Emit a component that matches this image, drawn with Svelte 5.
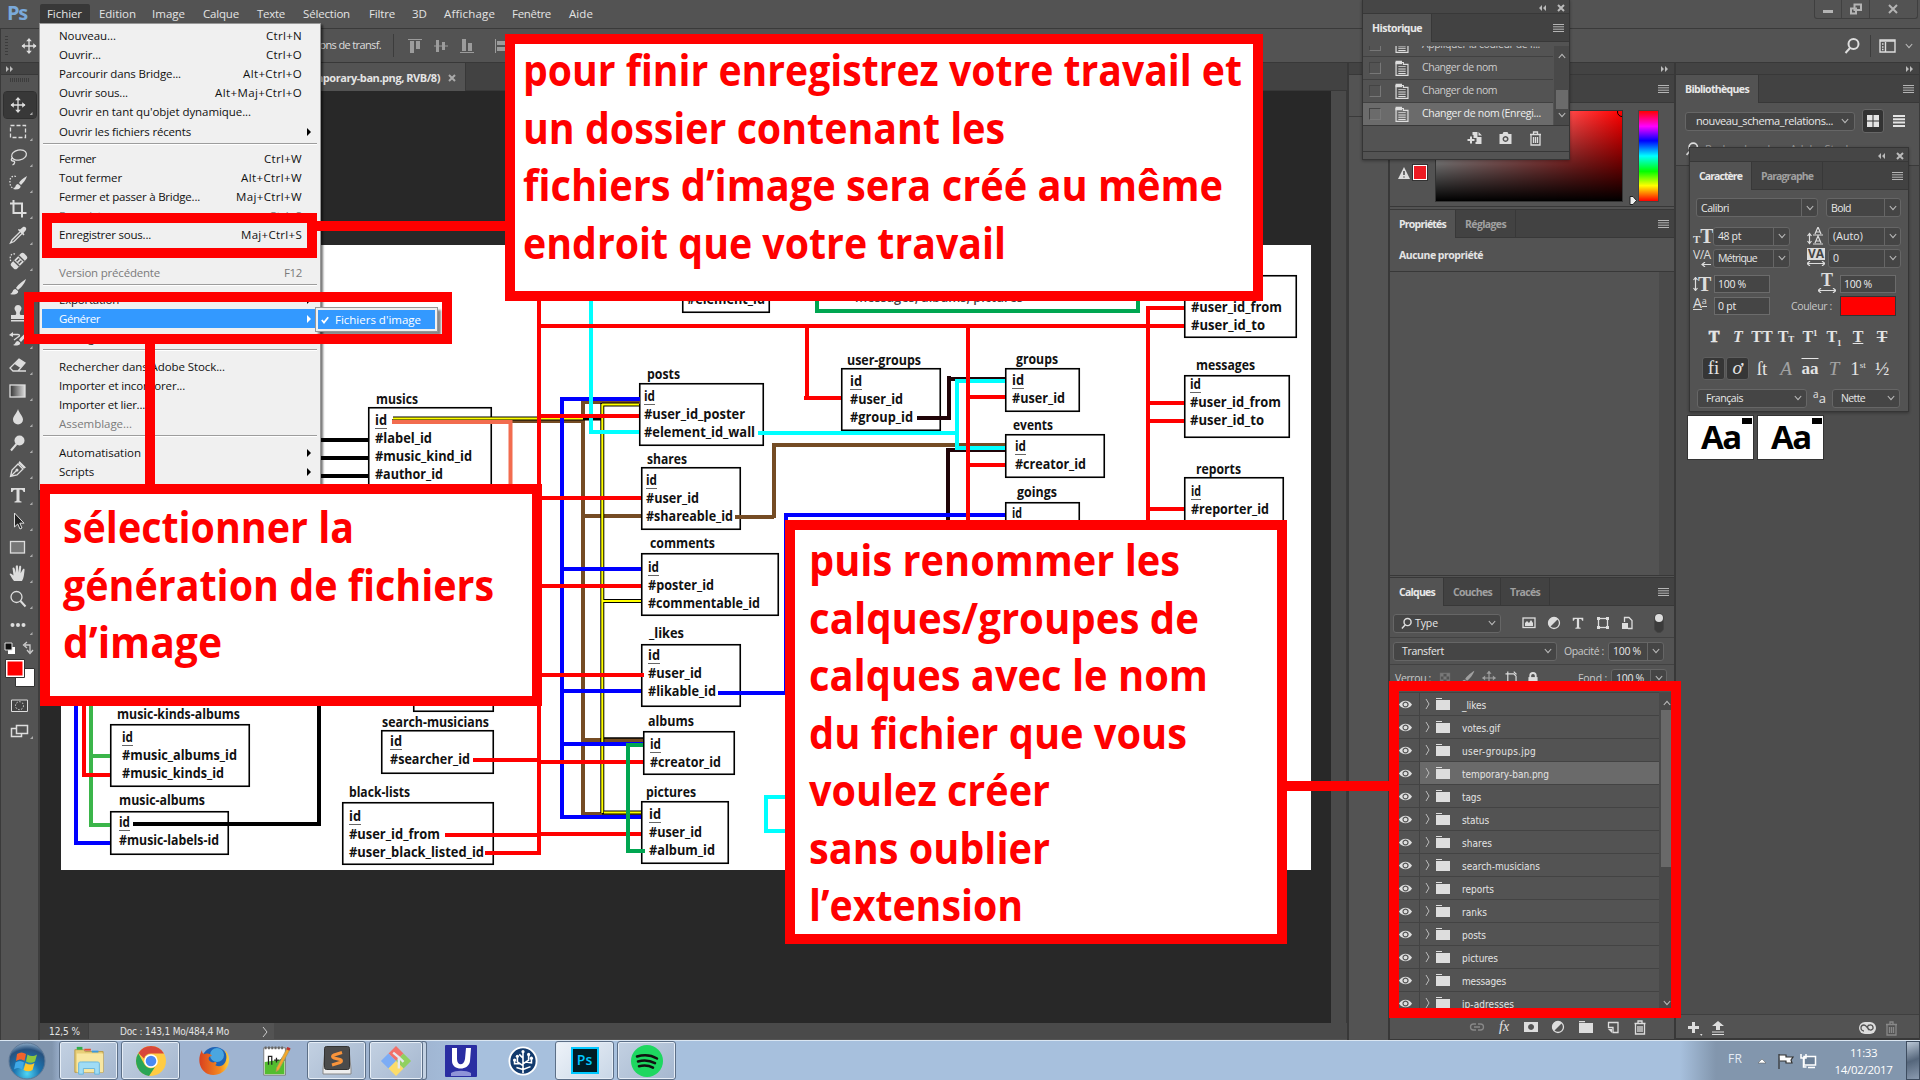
<script>
  // Spreads letters so a label occupies its designed width.
  function fit(node, w) {
    if (!w) return;
    const n = node.textContent.length;
    node.style.letterSpacing = (w - node.getBoundingClientRect().width) / n + 'px';
  }

  const menus = [
    ['Fichier', 50, 35], ['Edition', 53, 37], ['Image', 51, 33], ['Calque', 54, 36], ['Texte', 46, 28],
    ['Sélection', 66, 47], ['Filtre', 43, 26], ['3D', 32, 15], ['Affichage', 68, 51], ['Fenêtre', 57, 39], ['Aide', 45, 24]
  ];

  const groups = [
    [
      { l: 'Nouveau...', w: 57, k: 'Ctrl+N', kw: 36 }, { l: 'Ouvrir...', w: 42, k: 'Ctrl+O', kw: 36 },
      { l: 'Parcourir dans Bridge...', w: 122, k: 'Alt+Ctrl+O', kw: 59 }, { l: 'Ouvrir sous...', w: 69, k: 'Alt+Maj+Ctrl+O', kw: 87 },
      { l: "Ouvrir en tant qu'objet dynamique...", w: 192 }, { l: 'Ouvrir les fichiers récents', w: 132, sub: true, gap: 1 }
    ],
    [
      { l: 'Fermer', w: 37, k: 'Ctrl+W', kw: 38 }, { l: 'Tout fermer', w: 63, k: 'Alt+Ctrl+W', kw: 61 },
      { l: 'Fermer et passer à Bridge...', w: 141, k: 'Maj+Ctrl+W', kw: 66 }, { l: 'Enregistrer', w: 58, k: 'Ctrl+S', kw: 33, off: true },
      { l: 'Enregistrer sous...', w: 92, k: 'Maj+Ctrl+S', kw: 61 }, { l: 'Archiver...', w: 55, off: true },
      { l: 'Version précédente', w: 101, k: 'F12', kw: 18, off: true }
    ],
    [
      { l: 'Exportation', w: 60, sub: true, gap: 1 }, { l: 'Générer', w: 41, sub: true, on: true },
      { l: 'Partager...', w: 56 }
    ],
    [
      { l: 'Rechercher dans Adobe Stock...', w: 166, gap: 2 }, { l: 'Importer et incorporer...', w: 126 },
      { l: 'Importer et lier...', w: 86 }, { l: 'Assemblage...', w: 73, off: true }
    ],
    [{ l: 'Automatisation', w: 82, sub: true, gap: 2 }, { l: 'Scripts', w: 35, sub: true }]
  ];

  const tools = ['move', 'marquee', 'lasso', 'quick', 'crop', 'dropper', 'heal', 'brush', 'stamp', 'history', 'eraser',
    'gradient', 'drop', 'dodge', 'pen', 'type', 'arrow', 'rect', 'hand', 'zoom', 'dots'];

  const layers = [['_likes', 24], ['votes.gif', 38], ['user-groups.jpg', 74], ['temporary-ban.png', 87], ['tags', 19], ['status', 27],
    ['shares', 30], ['search-musicians', 78], ['reports', 32], ['ranks', 25], ['posts', 24], ['pictures', 36], ['messages', 44], ['ip-adresses', 52]];

  // Tables of the diagram: outline [x, y, right, bottom], title and rows [text, x, right, baseline].
  const tables = [
    { b: [368, 407, 492, 500], r: [['musics', 376, 418, 404], ['id', 375, 387, 425], ['#label_id', 375, 432, 443], ['#music_kind_id', 375, 472, 461], ['#author_id', 375, 443, 479]] },
    { b: [110, 724, 250, 787], r: [['music-kinds-albums', 117, 240, 719], ['id', 122, 133, 742], ['#music_albums_id', 122, 237, 760], ['#music_kinds_id', 122, 224, 778]] },
    { b: [110, 811, 229, 855], r: [['music-albums', 119, 205, 805], ['id', 119, 130, 827], ['#music-labels-id', 119, 219, 845]] },
    { b: [413, 650, 494, 712], r: [] },
    { b: [381, 730, 494, 774], r: [['search-musicians', 382, 489, 727], ['id', 390, 402, 746], ['#searcher_id', 390, 470, 764]] },
    { b: [342, 802, 494, 865], r: [['black-lists', 349, 410, 797], ['id', 349, 361, 821], ['#user_id_from', 349, 440, 839], ['#user_black_listed_id', 349, 484, 857]] },
    { b: [682, 250, 770, 313], r: [['#element_id', 687, 765, 304]] },
    { b: [639, 383, 764, 446], r: [['posts', 647, 680, 379], ['id', 644, 655, 401], ['#user_id_poster', 644, 745, 419], ['#element_id_wall', 644, 755, 437]] },
    { b: [641, 467, 741, 530], r: [['shares', 647, 687, 464], ['id', 646, 657, 485], ['#user_id', 646, 699, 503], ['#shareable_id', 646, 733, 521]] },
    { b: [641, 553, 779, 616], r: [['comments', 650, 715, 548], ['id', 648, 659, 572], ['#poster_id', 648, 714, 590], ['#commentable_id', 648, 760, 608]] },
    { b: [641, 644, 741, 707], r: [['_likes', 649, 684, 638], ['id', 648, 660, 660], ['#user_id', 648, 702, 678], ['#likable_id', 648, 716, 696]] },
    { b: [643, 731, 735, 775], r: [['albums', 648, 694, 726], ['id', 650, 661, 749], ['#creator_id', 650, 721, 767]] },
    { b: [641, 801, 729, 864], r: [['pictures', 646, 696, 797], ['id', 649, 661, 819], ['#user_id', 649, 702, 837], ['#album_id', 649, 715, 855]] },
    { b: [841, 368, 941, 431], r: [['user-groups', 847, 921, 365], ['id', 850, 862, 386], ['#user_id', 850, 903, 404], ['#group_id', 850, 913, 422]] },
    { b: [1005, 368, 1080, 412], r: [['groups', 1016, 1058, 364], ['id', 1012, 1024, 385], ['#user_id', 1012, 1065, 403]] },
    { b: [1005, 434, 1105, 478], r: [['events', 1013, 1053, 430], ['id', 1015, 1026, 451], ['#creator_id', 1015, 1086, 469]] },
    { b: [1005, 502, 1080, 540], r: [['goings', 1017, 1057, 497], ['id', 1012, 1022, 518]] },
    { b: [1184, 275, 1297, 338], r: [['#user_id_from', 1191, 1282, 312], ['#user_id_to', 1191, 1265, 330]] },
    { b: [1184, 375, 1290, 438], r: [['messages', 1196, 1255, 370], ['id', 1190, 1201, 389], ['#user_id_from', 1190, 1281, 407], ['#user_id_to', 1190, 1264, 425]] },
    { b: [1184, 477, 1284, 540], r: [['reports', 1196, 1241, 474], ['id', 1191, 1201, 496], ['#reporter_id', 1191, 1269, 514]] }
  ];

  const links = [
    ['#000', 4, 'M321 440H368M321 458H368M321 476H368'],
    ['#754c24', 4, 'M392 421H583M583 400V816M583 402H640M583 516H641M735 517H774M774 518V445M772 445H1005M583 740H643M583 814H641'],
    ['#000', 4, 'M393 418.5H604M602.3 403V813M602 404.5H639M602 601H641M602 812.5H641'],
    ['#000', 1.4, 'M602 738H643'],
    ['#ff0', 2, 'M393 418.5H583M602.3 404V813M602 404.5H639M602 601H641M604 812.5H641'],
    ['#200408', 4, 'M917 418H951M949 420V376M947 379H1005M948 520V450H1005'],
    ['#00f', 4, 'M640 399H562V817H641M562 569H641M562 691H641M562 744H643M718 693H786M786 530V515H1005M786 515V693'],
    ['#0ff', 4, 'M591 296V432H639M758 433H957M1005 381H957V448H1005M785 797H766V833M764 831H786'],
    ['#f26c4f', 4, 'M392 422H512M510.500 420V490'],
    ['#f00', 4, 'M539 296V853H485M539 326H1184M539 416H639M539 498H641M539 586H641M539 675H644M473 760H540M540 762H643M445 835H540M540 834H641M807 326V399M804 398H841M968 326V530M968 397H1005M968 465H1005M1148 530V308H1184M1148 403H1184M1148 421H1184M1148 509H1184'],
    ['#3bb54a', 4, 'M91 700V825H110M91 756H110'],
    ['#f00', 4, 'M84 700V775H110'],
    ['#00f', 4, 'M76 700V843H110'],
    ['#000', 4, 'M133 824H319V700'],
    ['#00a651', 4, 'M643 745H628V851H645M817 290V311H1138V290']
  ];

  const callouts = [
    { c: 'save-note', w: 738, h: 247, y0: 42, x0: 8, lines: [['pour finir enregistrez votre travail et', 719], ['un dossier contenant les', 482], ['fichiers d’image sera créé au même', 700], ['endroit que votre travail', 483]] },
    { c: 'generate-note', w: 482, h: 202, y0: 49, x0: 13, lines: [['sélectionner la', 291], ['génération de fichiers', 431], ['d’image', 159]] },
    { c: 'rename-note', w: 482, h: 404, y0: 46, x0: 14, lines: [['puis renommer les', 371], ['calques/groupes de', 390], ['calques avec le nom', 399], ['du fichier que vous', 378], ['voulez créer', 241], ['sans oublier', 241], ['l’extension', 214]] }
  ];
</script>

{#snippet t(text, w, cls = '')}<span class="t {cls}" use:fit={w}>{text}</span>{/snippet}

{#snippet chev(cls = '')}<svg class="chev {cls}" viewBox="0 0 8 6"><path d="M.8 1l3.200 3.600L7.200 1" /></svg>{/snippet}

{#snippet burger()}<svg class="burger" viewBox="0 0 11 8"><path d="M0 .5h11M0 2.800h11M0 5.200h11M0 7.500h11" /></svg>{/snippet}

{#snippet select(text, w, tw, divided = true)}
  <div class="select" class:divided style:width="{w}px">{@render t(text, tw)}<i>{@render chev()}</i></div>
{/snippet}

{#snippet icon(name)}
  <svg class="ic" viewBox="0 0 24 24">
    {#if name === 'move'}
      <path class="s" d="M12 5v14M5 12h14" /><path d="M12 4l-2.800 3.300h5.600zM12 20l-2.800-3.300h5.600zM4.500 12l3.300-2.800v5.600zM19.500 12l-3.300-2.800v5.600z" />
    {:else if name === 'marquee'}
      <path class="s" stroke-dasharray="4 2" d="M4.500 6.500h15v12h-15z" />
    {:else if name === 'lasso'}
      <ellipse class="s" cx="13" cy="10" rx="7.500" ry="5" transform="rotate(-12 13 10)" /><path class="s" d="M7 13c-2 0-2.500 3 0 3s2 3-.5 4" />
    {:else if name === 'quick'}
      <path class="s" stroke-dasharray="1.500 1.500" d="M10 5.500C5 4 3.500 8 4 12s2 5 5 5.500" /><path d="M21 5c-4 2-7 5-8 7l2 2c2-2 5-5 6-9zM12 13c-3 0-2 4-5 5 4 1 8 0 7.500-3z" />
    {:else if name === 'crop'}
      <path class="s w" d="M7.500 3v13h13M4 6.500h12v14" />
    {:else if name === 'dropper'}
      <path class="s" d="M14 9l-8 8-1.500 3L8 18.500l8-8" /><path d="M12 7l5.500 5.500 1-1-1-1.500 2.500-3c1-2-1-4-3-3l-3 2.500-1.500-.5z" />
    {:else if name === 'heal'}
      <path class="s" stroke-dasharray="1.500 1.500" d="M9 5C5 4 3 8 5 13" /><g transform="rotate(-45 13 12)"><rect x="4" y="8" width="18" height="8" rx="2.500" /><path class="dark" d="M9.500 8v8M16.500 8v8M11 10.500h4M11 13.500h4" /></g>
    {:else if name === 'brush'}
      <path d="M20 4c-5 3-9 7-10 9l2 2c3-2 7-7 8-11zM9.500 14c-3.500 0-2 4-5.500 5 4 1.500 9 0 8-3z" />
    {:else if name === 'stamp'}
      <path d="M12 4a3.500 3.500 0 0 1 2.500 6c-1 1.500-1 3 0 4H19v4H5v-4h4.500c1-1 1-2.500 0-4A3.500 3.500 0 0 1 12 4zM5 19h14v1.500H5z" />
    {:else if name === 'history'}
      <path d="M21 5c-4 3-7 6-8 8l2 2c3-3 5-6 6-10zM12 14c-3 0-2 3-5 4 4 1.500 8 0 7-2.500zM3 8l4-3v5z" /><path class="s" d="M6 7.500h6c2 0 2 2 0 2.500l-4 3" />
    {:else if name === 'eraser'}
      <path class="s" d="M13 6l6 4-7 8H7l-3-3zM7.500 18H20" /><path d="M13 6l6 4-4.500 5-6-4z" />
    {:else if name === 'gradient'}
      <rect class="s grad" x="4" y="6" width="15" height="12" />
    {:else if name === 'drop'}
      <path d="M12 4c1 4 5 7 5 10.500a5 5 0 0 1-10 0C7 11 11 8 12 4z" />
    {:else if name === 'dodge'}
      <circle cx="13.500" cy="9.500" r="5" /><path class="s w" d="M10.500 13L5 19.500" />
    {:else if name === 'pen'}
      <path class="s" d="M4.500 19.500L6 13l6-6 5 5-6 6-6.500 1.500zM5 19l6-6M13 5.500l5.500 5.500" /><circle cx="11" cy="13" r="1.500" /><path d="M13.500 4l6.500 6.500-2 1-5.500-5.500z" />
    {:else if name === 'type'}
      <path d="M5 5h14v4h-1.500c-.3-1.800-1-2.300-4-2.300V17c0 1 .5 1.300 2 1.400V19.500h-7v-1.100c1.500-.1 2-.4 2-1.400V6.700c-3 0-3.700.5-4 2.300H5z" />
    {:else if name === 'arrow'}
      <path class="blk" d="M8.500 4v14l3.200-3 2.300 5 2-1-2.200-4.800H18z" />
    {:else if name === 'rect'}
      <rect class="s mid" x="4.500" y="6.500" width="14" height="11.500" />
    {:else if name === 'hand'}
      <path d="M8 20c-2-2-3-5-4.500-7 1-1.500 2.500 0 4 1.500L6.500 7c1-1 2-.5 2.300 1l1 4V5c1-1 2-.8 2.200.5l.3 6 1-6.500c1.200-.8 2 0 1.900 1l-.6 6.300L17 8c1-.5 1.800 0 1.500 1.500C18 13 18 17 16 20z" />
    {:else if name === 'zoom'}
      <circle class="s" cx="10.500" cy="10" r="5.500" /><path class="s w" d="M14.500 14l5 5.500" />
    {:else if name === 'dots'}
      <circle cx="6.500" cy="12" r="2" /><circle cx="12" cy="12" r="2" /><circle cx="17.500" cy="12" r="2" />
    {:else if name === 'trash'}
      <path class="s" d="M6.500 8.500h11M10 8V6h4v2M7.500 9v10h9V9M10 11v6M12 11v6M14 11v6" />
    {:else if name === 'folder'}
      <path d="M5 6h6v1.200H5zM5 8h14v10H5z" />
    {:else if name === 'mask'}
      <path fill-rule="evenodd" d="M5 7h14v10H5zM12 9a3 3 0 1 0 .1 0z" />
    {:else if name === 'adj'}
      <circle class="s" cx="12" cy="12" r="5.500" /><path d="M16 8a5.600 5.600 0 1 0-8 8z" />
    {:else if name === 'new'}
      <path class="s" d="M7.500 7.500h9.500v10h-5v-5h-4.500z" /><path d="M7 14h4v4z" />
    {:else if name === 'link'}
      <path class="s dim" d="M11 9H8.500a3 3 0 0 0 0 6H11M13 9h2.500a3 3 0 0 1 0 6H13M9 12h6" />
    {:else if name === 'doc'}
      <path class="s" d="M5.500 6h8v2h5v12H5.500z" /><path d="M5 4h7v4H5zM8 10h8v1H8zM8 12.500h8v1H8zM8 15h8v1H8zM8 17.500h8v1H8z" />
    {:else if name === 'camera'}
      <path fill-rule="evenodd" d="M6 8h3l1-2h4l1 2h3v10H6zM12 10a3 3 0 1 0 .1 0z" /><circle cx="12" cy="13" r="1.500" />
    {:else if name === 'newdoc'}
      <path class="s w" d="M4 14h7M7.500 10.500v7" /><path d="M9 6h5v5h4v7h-6v-2h1v-4h-3V9H9zM15 6l3.500 3.500H15z" />
    {:else if name === 'image'}
      <rect class="s" x="6" y="7" width="12" height="9.500" /><path d="M8 15v-3l2-2 2 2 2-3 2 3v3z" />
    {:else if name === 'shape'}
      <rect class="s" x="7.500" y="7.500" width="9" height="9" /><path d="M6 6h3v3H6zM15 6h3v3h-3zM6 15h3v3H6zM15 15h3v3h-3z" />
    {:else if name === 'smart'}
      <path class="s" d="M9.500 11V6.500H14l3 3v8h-4" /><path d="M7 12h6v6H7z" />
    {:else if name === 'checker'}
      <path class="s dim" d="M7 7h10v10H7z" /><path class="fd" d="M7 7h3.300v3.300H7zM13.700 7H17v3.300h-3.300zM10.300 10.300h3.400v3.400h-3.400zM7 13.700h3.300V17H7zM13.700 13.700H17V17h-3.300z" />
    {:else if name === 'artboard'}
      <path class="s" d="M8.500 5v12M6 7.500h9l2.500 2.500v8M15 5l3 3" />
    {:else if name === 'lock'}
      <path class="s w" d="M9 12V9.500a3 3 0 0 1 6 0V12" /><path d="M7 11h10v8H7z" />
    {:else if name === 'search'}
      <circle class="s w" cx="13.500" cy="10" r="5" /><path class="s w" d="M10 14l-4.500 5" />
    {/if}
  </svg>
{/snippet}

<svg class="defs" width="0" height="0">
  <defs>
    <linearGradient id="toolgrad"><stop offset="0" stop-color="#333" /><stop offset="1" stop-color="#ddd" /></linearGradient>
    <radialGradient id="orb" cx=".5" cy=".85" r=".9"><stop offset="0" stop-color="#4fd6f5" /><stop offset=".4" stop-color="#1b74b0" /><stop offset=".75" stop-color="#27517e" /><stop offset="1" stop-color="#a9c4dc" /></radialGradient>
    <linearGradient id="fox" x2="1"><stop offset="0" stop-color="#d9411e" /><stop offset=".7" stop-color="#f58a1f" /><stop offset="1" stop-color="#ffd23a" /></linearGradient>
  </defs>
</svg>

<div class="app">
  <header class="menubar">
    <b class="logo">Ps</b>
    <nav>
      {#each menus as [label, cell, w], i}
        <div class="menu" class:opened={i === 0} style:width="{cell}px">{@render t(label, w)}</div>
      {/each}
    </nav>
    <div class="wincontrols">
      <i class="min"><svg viewBox="0 0 12 12"><path d="M1 7h10v3H1z" /></svg></i>
      <i><svg viewBox="0 0 12 12"><path class="o" d="M4.500 1.500h6.500v5.500H4.500zM1 5.500h5v5H1z" /></svg></i>
      <i class="max"><svg viewBox="0 0 12 12"><path class="o" d="M2 2l8 8M10 2l-8 8" /></svg></i>
    </div>
  </header>

  <div class="options">
    <span class="grip"></span>
    {@render icon('move')}
    <div class="opttext">{@render t('Options de transf.', 81)}</div>
    <svg class="aligns" viewBox="0 0 110 14">
      <path d="M0 0h14v1H0zM2 2h4v12H2zM8 2h4v8H8zM28 1h3v12h-3zM34 3h3v8h-3zM26 6.500h14v1H26zM52 13h14v1H52zM54 0h4v12h-4zM60 4h4v8h-4zM87 0h1v14h-1zM89 2h12v4H89zM89 8h8v4h-8z" />
    </svg>
    <div class="optright">
      {@render icon('search')}<span class="vr"></span>
      <svg class="ws" viewBox="0 0 17 14"><path d="M1 1h15v12H1z" /><path d="M1 2h15M3 5h1.500M3 8h1.500M3 10.500h1.500M6.500 3v10" /></svg>
      {@render chev()}
    </div>
  </div>

  <main>
    <aside class="toolbar">
      <div class="striphead"><svg viewBox="0 0 8 6"><path d="M0 0l3 3-3 3zM4 0l3 3-3 3z" /></svg></div>
      <span class="hgrip"></span>
      {#each tools as name, i}
        <div class="tool" class:active={i === 0}>{@render icon(name)}<em></em></div>
      {/each}
      <svg class="swaps" viewBox="0 0 38 82">
        <path d="M7 9h7v7H7z" fill="#fff" /><path d="M4 5h7v7H4z" fill="#111" stroke="#ddd" />
        <path d="M24 7h5v7M26 4l-3.500 3L26 10M26 12l3 3.500 3-3.500" stroke="#ccc" stroke-width="1.300" fill="none" />
        <path d="M14.500 30.500h19v18h-19z" fill="#fff" stroke="#333" /><path d="M4.500 21.500h19v18h-19z" fill="#fff" stroke="#333" /><path d="M6.500 23.500h15v14h-15z" fill="red" />
        <path d="M10.500 62h16v11.500h-16z" fill="#444" stroke="#ddd" /><circle cx="18.500" cy="67.700" r="4" fill="none" stroke="#ddd" stroke-dasharray="1.500 1.500" />
      </svg>
      <svg class="screenmode" viewBox="0 0 24 16"><path d="M1.500 4.500h10v8h-10z" fill="none" stroke="#ddd" stroke-width="1.500" /><path d="M6.500 1.500h11v8h-11z" fill="#535353" stroke="#ddd" stroke-width="1.500" /><path d="M23 12v3h-3z" fill="#aaa" /></svg>
    </aside>

    <section class="doc">
      <div class="doctabs"><div class="doctab">{@render t('temporary-ban.png, RVB/8)', 138)}<svg viewBox="0 0 8 8"><path d="M1 1l6 6M7 1L1 7" /></svg></div></div>
      <div class="work">
        <div class="stage">
          <svg class="diagram" viewBox="61 245 1250 625">
            <rect x="61" y="245" width="1250" height="625" fill="#fff" />
            {#each tables as { b }}
              <rect class="tbl" x={b[0] + 0.75} y={b[1] + 0.75} width={b[2] - b[0] - 1.5} height={b[3] - b[1] - 1.5} />
            {/each}
            {#each links as [color, width, d]}
              <path {d} stroke={color} stroke-width={width} fill="none" />
            {/each}
            {#each tables as { r }}
              {#each r as [text, x, x2, y]}
                <text {x} {y} textLength={x2 - x} lengthAdjust="spacingAndGlyphs">{text}</text>
                {#if text === 'id'}<path class="ul" d="M{x} {y + 3.5}h{x2 - x}" />{/if}
              {/each}
            {/each}
            <text class="soft" x="855" y="302" textLength="168" lengthAdjust="spacingAndGlyphs">messages, albums, pictures</text>
          </svg>
        </div>
        <div class="vscroll"></div>
      </div>
      <footer class="status"><span class="pct">{@render t('12,5 %', 31)}</span><span class="size">{@render t('Doc : 143,1 Mo/484,4 Mo', 109)}<svg viewBox="0 0 6 10"><path d="M1 0l4 5-4 5" /></svg></span></footer>
    </section>

    <aside class="icondock"><div class="striphead"></div><div class="dockbox"></div></aside>

    <aside class="panels">
      <div class="striphead end"><svg viewBox="0 0 8 6"><path d="M0 0l3 3-3 3zM4 0l3 3-3 3z" /></svg></div>
      <section class="color">
        <div class="tabs">{@render burger()}</div>
        <div class="colorbody">
          <div class="warn"><svg viewBox="0 0 12 12"><path d="M6 0l6 12H0z" /><path class="bang" d="M6 4v4M6 9.500v1" /></svg><b></b></div>
          <div class="field"><i></i></div>
          <div class="hue"><svg viewBox="0 0 8 9"><path d="M1 .5h3l3.500 4L4 8.500H1z" /></svg></div>
        </div>
      </section>
      <section class="props">
        <div class="tabs"><b class="tab on w66">{@render t('Propriétés', 47)}</b><b class="tab w60">{@render t('Réglages', 41)}</b>{@render burger()}</div>
        <div class="noprop">{@render t('Aucune propriété', 84, 'bold')}</div>
        <div class="propbody"></div>
      </section>
      <section class="layers">
        <div class="tabs"><b class="tab on w54">{@render t('Calques', 36)}</b><b class="tab w57">{@render t('Couches', 39)}</b><b class="tab w49">{@render t('Tracés', 30)}</b>{@render burger()}</div>
        <div class="lrow filter">
          <div class="select typesel" style:width="108px">{@render icon('search')}{@render t('Type', 23)}<i>{@render chev()}</i></div>
          <div class="ficons">{@render icon('image')}{@render icon('adj')}{@render icon('type')}{@render icon('shape')}{@render icon('smart')}</div>
          <div class="switch"><i></i></div>
        </div>
        <div class="lrow blend">
          {@render select('Transfert', 164, 42, false)}<label>{@render t('Opacité :', 40)}</label>{@render select('100 %', 56, 28)}
        </div>
        <div class="lrow locks">
          <label>{@render t('Verrou :', 36)}</label>
          <div class="lockset"><span class="faded">{@render icon('checker')}</span><span class="faded">{@render icon('brush')}</span><span class="faded">{@render icon('move')}</span>{@render icon('artboard')}{@render icon('lock')}</div>
          <label>{@render t('Fond :', 29)}</label>{@render select('100 %', 56, 28)}
        </div>
        <div class="list">
          <ul>
            {#each layers as [name, w], i}
              <li class:sel={i === 3}>
                <span class="eye"><svg viewBox="0 0 14 9"><path fill-rule="evenodd" d="M0 4.500C3-1 11-1 14 4.500 11 10 3 10 0 4.500zM7 1.200a3.300 3.300 0 1 0 .1 0z" /><circle cx="7" cy="4.500" r="2" /></svg></span>
                <span class="row"><svg class="twist" viewBox="0 0 5 10"><path d="M1 0l3 5-3 5" /></svg><svg class="fold" viewBox="0 0 14 12"><path d="M0 0h6v1H0zM0 2h14v10H0z" /></svg>{@render t(name, w)}</span>
              </li>
            {/each}
          </ul>
          <div class="lscroll">{@render chev('up')}<i></i>{@render chev()}</div>
        </div>
        <div class="lfoot">{@render icon('link')}<em>fx</em>{@render icon('mask')}{@render icon('adj')}{@render icon('folder')}{@render icon('new')}{@render icon('trash')}</div>
      </section>
    </aside>

    <aside class="libs">
      <div class="striphead end"><svg viewBox="0 0 8 6"><path d="M0 0l3 3-3 3zM4 0l3 3-3 3z" /></svg></div>
      <div class="tabs"><b class="tab on w83">{@render t('Bibliothèques', 64)}</b>{@render burger()}</div>
      <div class="libtop">
        <div class="librow">
          {@render select('nouveau_schema_relations...', 170, 137, false)}
          <i class="gridbtn"><svg viewBox="0 0 12 12"><path d="M0 0h5.500v5.500H0zM6.500 0H12v5.500H6.500zM0 6.500h5.500V12H0zM6.500 6.500H12V12H6.500z" /></svg></i>
          <svg class="listbtn" viewBox="0 0 12 12"><path d="M0 0h12v2H0zM0 3.300h12v2H0zM0 6.600h12v2H0zM0 10h12v2H0z" /></svg>
        </div>
        <div class="libsearch">{@render icon('search')}{@render t('Rechercher dans Adobe Stock', 146)}</div>
      </div>
      <div class="libbody"><div class="card"><b>Aa</b><i></i></div><div class="card"><b>Aa</b><i></i></div></div>
      <div class="libfoot">
        <svg viewBox="0 0 40 16"><path d="M5 2h3v4h4v3H8v4H5V9H1V6h4zM13 14h2.500l-1.200 2zM29 10V6h-4l6-5 6 5h-4v4zM25 11.500h12v1H25zM25 14h12v1H25z" /></svg>
        <svg class="cc" viewBox="0 0 40 16"><path fill-rule="evenodd" d="M6 2h5a6 6 0 0 1 0 12H6A6 6 0 0 1 6 2z" /><path d="M5 11a3 3 0 0 1 0-6c3 0 4 6 7 5a2.500 2.500 0 0 0-1-5c-3 0-3 3-1 5" fill="none" stroke="#535353" stroke-width="1.300" /><path class="bin" d="M27 4.500h11M31 4V2h3v2M28 5v10h9V5M30.500 7v6M32.500 7v6M34.500 7v6" /></svg>
      </div>
    </aside>
  </main>

  <footer class="taskbar">
    <div class="start"><svg viewBox="0 0 38 38"><circle cx="19" cy="19" r="18" fill="url(#orb)" stroke="#5e7896" /><path d="M9 12c3-2 6-2 9 0l-1.500 7c-3-2-5-2-8.500 0z" fill="#f0632c" /><path d="M19.500 12.500c3 2 6 2 9.500 0l-2 7c-3 2-6 1.500-9 0z" fill="#8cc63e" /><path d="M7.500 20.500c3-2 6-2 8.500 0l-2 7c-3-2-5-2-8 0z" fill="#3fa9e8" /><path d="M17.500 21c3 2 6 2 9 0l-2 7c-3 2-6 1.500-9 0z" fill="#ffc629" /></svg></div>
    <div class="tb"><svg viewBox="0 0 34 32"><path d="M2 4h9l2 2h19v22H2z" fill="#e8cf78" stroke="#b99a45" /><path d="M4 8h28v20H4z" fill="#f8e7a2" /><path d="M4 1h6v3H4z" fill="#2fae4b" /><path d="M12 3h7v2h-7z" fill="#e84f2c" /><path d="M20 5h7v2h-7z" fill="#3a9ade" /><path d="M6 30V19c0-2 1-2 3-2h16c2 0 3 0 3 2v11h-5v-6H11v6z" fill="#9fdcf5" stroke="#66b4dd" /></svg></div>
    <div class="tb g3"><svg viewBox="0 0 32 32"><circle cx="16" cy="16" r="15" fill="#fc4" /><path d="M16 1a15 15 0 0 1 13 7.500H16a7.500 7.500 0 0 0-7 5L3.500 8A15 15 0 0 1 16 1z" fill="#d8473a" /><path d="M3.300 8.200A15 15 0 0 0 14 31l6-9a7.500 7.500 0 0 1-10.500-2.500z" fill="#2aa556" /><circle cx="16" cy="16" r="6.800" fill="#fff" /><circle cx="16" cy="16" r="5.300" fill="#4a8af4" /></svg></div>
    <div class="plain p1"><svg viewBox="0 0 32 32"><circle cx="17" cy="15" r="13" fill="#1f62b5" /><circle cx="19" cy="10" r="7" fill="#4aa6e0" /><path d="M4 5c0 3 1 4 3 4 3-1 6 0 7 2-3 0-4 2-3 4s4 3 6 2c2 0 2 2 0 3 5 3 10 0 11-5 1-4 0-7-2-10 5 3 6 9 4 15-3 8-12 12-20 9C1 25-1 14 4 5z" fill="url(#fox)" /></svg></div>
    <div class="plain p2"><svg viewBox="0 0 32 34"><path d="M3 3h23v29H3z" fill="#fff" stroke="#777" /><path d="M4 18l21-3v16H4z" fill="#53bd2f" /><path d="M4 3h21" stroke="#666" stroke-width="3" stroke-dasharray="2 1.500" /><path d="M8 21v-9h3.500v9M14 16h5M16.500 13.500v5M20 16h5M22.500 13.500v5" stroke="#222" fill="none" stroke-width="1.300" /><path d="M28 3l3 1.500-12 22-3 2 .5-4z" fill="#f4a72c" stroke="#996" stroke-width=".7" /><path d="M28 2l3.500 1.500-1.500 2.500-3-1.500z" fill="#b33" /></svg></div>
    <div class="tb p3"><svg viewBox="0 0 32 32"><path d="M2 24l2-20h24l2 20v5H2z" fill="#eee" stroke="#888" /><rect x="3.500" y="1.500" width="25" height="23" rx="2" fill="#4b4b4b" stroke="#333" /><path d="M21 7.500l-8 2.500c-2 .8-2 2.500 0 3l6 1.500c2 .6 2 2.300 0 3L11 20" fill="none" stroke="#f9943b" stroke-width="3" /></svg></div>
    <div class="tb stack g3"><svg viewBox="0 0 34 34"><path d="M17 1l8 8-8 8-8-8z" fill="#f1716a" /><path d="M25 9l8 8-8 8-8-8z" fill="#90d060" /><path d="M9 9l8 8-8 8-8-8z" fill="#7cacf5" /><path d="M17 17l8 8-8 8-8-8z" fill="#fcdc6b" /><path d="M14 8l6 5v12M20 13l5 5" stroke="#e4e8ee" stroke-width="2.500" fill="none" /></svg></div>
    <div class="plain p4"><svg viewBox="0 0 32 32"><rect width="32" height="32" rx="1" fill="#2a2ea2" /><path d="M7 3h5v11c0 7 7 7 8 0l1-11h5l-1 13c-1 10-18 10-18 0z" fill="#fff" /><path d="M6 28c5-3 15-3 20 0v3H6z" fill="#8f94d8" /></svg></div>
    <div class="plain p5"><svg viewBox="0 0 32 32"><circle cx="16" cy="16" r="14.500" fill="#123a6d" stroke="#fff" stroke-width="2" /><path d="M16 29V6M16 21l-6-4v-5M16 19l6-4v-6M13 19H7v-4M19 17l6 1v-5M16 13l-4-4M16 25l8-3M16 25l-7-2" stroke="#fff" stroke-width="1.700" fill="none" /><g fill="#fff"><circle cx="16" cy="6" r="1.700" /><circle cx="10" cy="11" r="1.700" /><circle cx="22" cy="9" r="1.700" /><circle cx="7" cy="15" r="1.700" /><circle cx="25" cy="13" r="1.700" /></g></svg></div>
    <div class="tb p6 bright"><span class="psicon">Ps</span></div>
    <div class="tb g3"><svg viewBox="0 0 32 32"><circle cx="16" cy="16" r="16" fill="#1ed760" /><path d="M6 11.500c7-2 14-1.500 20 2M7 16.500c6-1.700 12-1 17 1.700M8 21.200c5-1.200 10-.8 14 1.500" stroke="#111" stroke-width="2.500" fill="none" stroke-linecap="round" /></svg></div>
    <div class="tray">
      <span class="lang">{@render t('FR', 14)}</span>
      <svg viewBox="0 0 60 18"><path d="M0 11l4-4 4 4z" fill="#fff" stroke="#555" stroke-width=".5" /><path d="M21 2v15M21 3h7v2h7l-2 3 1 3h-6V9h-6" fill="#fff" stroke="#333" stroke-width="1.200" /><path d="M46 4.500h11.500v8.500H46z" fill="#6c8097" stroke="#fff" stroke-width="1.500" /><path d="M50 15.500h7M43 2v4h5V2M45.500 6v9h3" stroke="#fff" stroke-width="1.500" fill="none" /></svg>
      <div class="clock">{@render t('11:33', 27)}{@render t('14/02/2017', 58)}</div>
      <i class="desk"></i>
    </div>
  </footer>

  <!-- Floating history panel -->
  <section class="float historique">
    <div class="fhead"><svg viewBox="0 0 26 8"><path d="M3 1v6L0 4zM7 1v6L4 4z" /><path class="x" d="M19 1l6 6M25 1l-6 6" /></svg></div>
    <div class="tabs"><b class="tab on w69">{@render t('Historique', 50)}</b>{@render burger()}</div>
    <div class="hist">
      <ul>
        <li><i></i>{@render icon('doc')}{@render t('Appliquer la couleur de f...', 118)}</li>
        <li><i></i>{@render icon('doc')}{@render t('Changer de nom', 75)}</li>
        <li><i></i>{@render icon('doc')}{@render t('Changer de nom', 75)}</li>
        <li class="sel"><i></i>{@render icon('doc')}{@render t('Changer de nom (Enregi...', 119)}</li>
      </ul>
      <div class="hscroll">{@render chev('up')}<i></i>{@render chev()}</div>
    </div>
    <div class="hfoot">{@render icon('newdoc')}{@render icon('camera')}{@render icon('trash')}</div>
    <div class="hbase"><span class="hgrip"></span></div>
  </section>

  <!-- Floating character panel -->
  <section class="float caractere">
    <div class="fhead"><svg viewBox="0 0 26 8"><path d="M3 1v6L0 4zM7 1v6L4 4z" /><path class="x" d="M19 1l6 6M25 1l-6 6" /></svg></div>
    <div class="tabs"><b class="tab on w62">{@render t('Caractère', 43)}</b><b class="tab w71">{@render t('Paragraphe', 52)}</b>{@render burger()}</div>
    <div class="cbody">
      <div class="crow first">{@render select('Calibri', 122, 28)}{@render select('Bold', 75, 20)}</div>
      <div class="crow">
        <span class="g serif"><small>T</small><b>T</b></span>{@render select('48 pt', 77, 23)}
        <span class="g lead"><svg viewBox="0 0 16 18"><path d="M2.500 7v9M.5 9l2-2.500 2 2.500M.5 14l2 2.500 2-2.500M6 8h10M6 17h10M8 7l3-7 3 7M9 5h4M8 16l3-7 3 7M9 14h4" /></svg></span>{@render select('(Auto)', 73, 30)}
      </div>
      <div class="crow">
        <span class="g va"><u>V/A</u><svg viewBox="0 0 18 5"><path d="M9 2.500h9M12 0L9 2.500 12 5" /></svg></span>{@render select('Métrique', 77, 39)}
        <span class="g vab"><b>VA</b><svg viewBox="0 0 18 5"><path d="M0 2.500h18M3 0L0 2.500 3 5M15 0l3 2.500L15 5" /></svg></span>{@render select('0', 73, 6)}
      </div>
      <div class="crow scale">
        <span class="g serif"><svg class="ud" viewBox="0 0 5 14"><path d="M2.500 1v12M.5 3l2-2.500 2 2.500M.5 11l2 2.500 2-2.500" /></svg><b>T</b></span><span class="inp">{@render t('100 %', 28)}</span>
        <span class="g vab plainT"><b>T</b><svg viewBox="0 0 18 5"><path d="M0 2.500h18M3 0L0 2.500 3 5M15 0l3 2.500L15 5" /></svg></span><span class="inp">{@render t('100 %', 28)}</span>
      </div>
      <div class="crow base">
        <span class="g aa"><u>A</u><sup>a</sup></span><span class="inp">{@render t('0 pt', 18)}</span>
        <label>{@render t('Couleur :', 41)}</label><span class="redchip"></span>
      </div>
      <div class="glyphs"><b>T</b><i>T</i><span>TT</span><span>T<small>T</small></span><span>T<sup>1</sup></span><span>T<sub>1</sub></span><u>T</u><s>T</s></div>
      <div class="glyphs ot"><span class="box">fi</span><span class="box"><i>ơ</i></span><span>ſt</span><i class="faded">A</i><span class="over">aa</span><i class="faded">T</i><span>1<sup>st</sup></span><span>½</span></div>
      <div class="crow lang2">{@render select('Français', 110, 37, false)}<span class="aasym"><sup>a</sup>a</span>{@render select('Nette', 68, 24, false)}</div>
    </div>
  </section>

  <!-- Open "Fichier" menu -->
  <div class="dropdown">
    {#each groups as group, gi}
      {#if gi > 0}<hr />{/if}
      {#each group as it}
        <div class="item" class:off={it.off} class:on={it.on} class:gap={it.gap === 1} class:gap2={it.gap === 2}>
          {@render t(it.l, it.w)}
          {#if it.k}{@render t(it.k, it.kw, 'key')}{/if}
          {#if it.sub}<svg viewBox="0 0 4 8"><path d="M0 0l4 4-4 4z" /></svg>{/if}
        </div>
      {/each}
    {/each}
  </div>
  <div class="submenu"><div><svg viewBox="0 0 8 8"><path d="M.8 4l2.200 2.600L7.200 1.200" /></svg>{@render t("Fichiers d'image", 86)}</div></div>

  <!-- Red annotations -->
  <i class="link l1"></i><i class="link l2"></i><i class="link l3"></i>
  <i class="frame f1"></i><i class="frame f2"></i><i class="frame f3"></i>
  {#each callouts as c}
    <div class="note {c.c}">
      <svg viewBox="0 0 {c.w} {c.h}">
        {#each c.lines as [line, w], i}
          <text x={c.x0} y={c.y0 + i * 57.5} textLength={w} lengthAdjust="spacingAndGlyphs">{line}</text>
        {/each}
      </svg>
    </div>
  {/each}
</div>

<style>
  :global(body) { margin: 0; overflow: hidden; background: #535353; }
  * { box-sizing: border-box; }
  .app { position: relative; width: 1920px; height: 1080px; overflow: hidden; display: flex; flex-direction: column; font: 11px/14px 'Open Sans', 'Noto Sans', sans-serif; color: #e4e4e4; background: #535353; }
  .defs { position: absolute; }
  ul { list-style: none; margin: 0; padding: 0; }
  svg { display: block; flex: none; }
  .t { display: inline-block; white-space: pre; flex: none; }
  .ic { width: 24px; height: 24px; fill: #ddd; }
  .ic .s { fill: none; stroke: #ddd; stroke-width: 1.3; }
  .ic .w { stroke-width: 2; }
  .ic .grad { fill: url(#toolgrad); }
  .ic .mid { fill: #777; }
  .ic .dark { stroke: #535353; fill: none; stroke-width: 1.4; }
  .ic .blk { fill: #222; stroke: #ddd; }
  .ic .dim { stroke: #888; }
  .ic .fd { fill: #999; }
  .chev { width: 8px; height: 6px; fill: none; stroke: #bbb; stroke-width: 1.1; }
  .chev.up { transform: rotate(180deg); }
  .faded { opacity: .55; }

  .menubar { height: 29px; flex: none; display: flex; border-bottom: 1px solid #3a3a3a; font-size: 11.5px; }
  .logo { width: 40px; padding-left: 7px; font: bold 20px/26px 'Open Sans', sans-serif; color: #7aa9da; letter-spacing: -1.2px; }
  nav { display: flex; padding-top: 4px; }
  .menu { height: 19px; line-height: 19px; padding-left: 9px; }
  .menu.opened { background: #383838; padding-left: 7px; border-radius: 2px 2px 0 0; }
  .wincontrols { margin-left: auto; margin-right: 2px; width: 104px; height: 19px; border: 1px solid #3f3f3f; border-top: 0; border-radius: 0 0 3px 3px; display: flex; }
  .wincontrols i { width: 28px; display: flex; align-items: center; justify-content: center; border-right: 1px solid #414141; }
  .wincontrols i.max { width: 48px; border: 0; }
  .wincontrols svg { width: 12px; height: 12px; fill: #b4b4b4; }
  .wincontrols .o { fill: none; stroke: #b4b4b4; stroke-width: 2; }

  .options { height: 34px; flex: none; display: flex; align-items: center; border-bottom: 1px solid #383838; border-left: 1px solid #3a3a3a; }
  .grip { width: 3px; height: 19px; margin-left: 4px; margin-right: 9px; background: repeating-linear-gradient(#3c3c3c 0 1px, transparent 1px 3px); }
  .opttext { width: 353px; text-align: right; padding-right: 12px; height: 23px; line-height: 22px; border-right: 1px solid #3c3c3c; color: #ddd; }
  .aligns { width: 110px; height: 14px; margin-left: 14px; fill: #9c9c9c; }
  .optright { margin-left: auto; display: flex; align-items: center; padding-right: 7px; }
  .optright .ic { margin-right: 2px; }
  .vr { width: 1px; height: 22px; background: #3c3c3c; margin: 0 8px 0 4px; }
  .ws { width: 17px; height: 14px; fill: none; stroke: #ddd; stroke-width: 1.4; margin-right: 9px; }

  main { height: 977px; flex: none; display: grid; grid-template: 977px / 40px 1307px 42px 287px 244px; }
  .striphead { height: 12px; background: #434343; border-bottom: 1px solid #383838; display: flex; align-items: center; padding-left: 6px; flex: none; }
  .striphead.end { justify-content: flex-end; padding-right: 5px; }
  .striphead svg { width: 8px; height: 6px; fill: #bbb; }
  .toolbar { background: #535353; border-left: 1px solid #3a3a3a; border-right: 2px solid #3e3e3e; display: flex; flex-direction: column; align-items: center; }
  .toolbar .striphead { width: 100%; padding-left: 5px; }
  .hgrip { width: 20px; height: 4px; background: repeating-linear-gradient(90deg, #3c3c3c 0 1px, transparent 1px 2px); }
  .toolbar .hgrip { margin: 3px 0 10px; }
  .tool { width: 32px; height: 26px; flex: none; display: flex; align-items: center; padding-left: 2px; position: relative; border-radius: 3px; }
  .tool.active { background: #383838; outline: 1px solid #2f2f2f; }
  .tool em { position: absolute; right: 3px; bottom: 3px; width: 3px; height: 3px; clip-path: polygon(100% 0, 100% 100%, 0 100%); background: #aaa; }
  .swaps { width: 38px; height: 82px; }
  .screenmode { width: 24px; height: 16px; margin-top: 4px; margin-left: 4px; }

  .doc { display: flex; flex-direction: column; min-width: 0; }
  .doctabs { height: 28px; background: #424242; border-bottom: 1px solid #383838; flex: none; }
  .doctab { width: 426px; height: 28px; background: #535353; border-right: 1px solid #383838; display: flex; align-items: center; justify-content: flex-end; padding: 1px 9px 0 0; font-weight: 700; gap: 8px; }
  .doctab svg { width: 8px; height: 8px; stroke: #aaa; stroke-width: 2; }
  .work { flex: 1; display: flex; min-height: 0; }
  .stage { flex: 1; background: #282828; padding: 154px 0 0 21px; }
  .diagram { width: 1250px; height: 625px; }
  .diagram text, .note text { font-family: 'Open Sans', 'Noto Sans', sans-serif; font-weight: 700; }
  .diagram text { font-size: 13.6px; fill: #111; }
  .diagram .soft { font-weight: 600; fill: #444; }
  .tbl { fill: #fff; stroke: #000; stroke-width: 1.6; }
  .ul { stroke: #666; stroke-width: 1; }
  .vscroll { width: 16px; background: #4a4a4a; border-right: 1px solid #3a3a3a; }
  .status { height: 16px; margin-bottom: 1px; flex: none; background: #4a4a4a; display: flex; font: 10px/15px 'DejaVu Sans Condensed', 'DejaVu Sans', sans-serif; }
  .pct { width: 48px; padding: 1px 0 0 9px; background: #454545; }
  .size { width: 186px; background: #535353; border-left: 1px solid #3f3f3f; padding: 1px 6px 0 31px; display: flex; justify-content: space-between; }
  .size svg { width: 6px; height: 10px; margin-top: 3px; fill: none; stroke: #ccc; }

  .icondock { background: #535353; border-left: 2px solid #383838; border-right: 1px solid #383838; }
  .dockbox { height: 42px; border-bottom: 1px solid #3a3a3a; }

  .panels { display: flex; flex-direction: column; border-right: 2px solid #383838; border-left: 1px solid #383838; background: #535353; min-width: 0; }
  .tabs { height: 28px; flex: none; background: #424242; display: flex; border-bottom: 1px solid #383838; align-items: flex-start; font-size: 10.5px; }
  .tab { height: 28px; line-height: 28px; padding-left: 9px; color: #a0a0a0; border-right: 1px solid #383838; }
  .tab.on { background: #535353; color: #e8e8e8; }
  .w66 { width: 66px; } .w60 { width: 60px; } .w54 { width: 54px; } .w57 { width: 57px; } .w49 { width: 49px; } .w83 { width: 83px; } .w69 { width: 69px; } .w62 { width: 62px; } .w71 { width: 71px; }
  .burger { width: 11px; height: 8px; stroke: #b5b5b5; margin: 10px 5px 0 auto; }
  .color { height: 132px; border-bottom: 1px solid #383838; flex: none; }
  .colorbody { display: flex; padding-top: 7px; }
  .warn { width: 45px; display: flex; padding: 55px 0 0 8px; gap: 3px; }
  .warn svg { width: 12px; height: 12px; margin-top: 2px; fill: #ddd; }
  .bang { stroke: #444; stroke-width: 1.5; }
  .warn b { width: 14px; height: 15px; background: #ed1c24; border: 1.5px solid #fff; outline: 1px solid #333; }
  .field { width: 188px; height: 92px; background: linear-gradient(transparent, #000), linear-gradient(90deg, #fff, red); border: 1px solid #333; overflow: hidden; display: flex; justify-content: flex-end; }
  .field i { width: 10px; height: 10px; border: 1px solid #000; border-radius: 50%; margin: -4px -5px 0 0; }
  .hue { width: 21px; height: 92px; margin-left: 15px; border: 1px solid #444; background: linear-gradient(red, #f0f 17%, #00f 33%, #0ff 50%, #0f0 67%, #ff0 83%, red); display: flex; align-items: flex-end; }
  .hue svg { width: 8px; height: 9px; margin: 0 0 -4px -10px; fill: #eee; stroke: #222; }
  .props { height: 367px; margin-top: 2px; border-top: 1px solid #383838; border-bottom: 1px solid #383838; display: flex; flex-direction: column; flex: none; }
  .bold { font-weight: 700; }
  .noprop { height: 34px; padding: 10px 9px; border-bottom: 1px solid #383838; font-size: 10.5px; }
  .propbody { flex: 1; border-right: 15px solid #4a4a4a; }
  .layers { flex: 1; margin-top: 1px; border-top: 1px solid #383838; display: flex; flex-direction: column; min-height: 0; }
  .lrow { height: 27px; display: flex; align-items: center; padding-left: 3px; border-bottom: 1px solid #424242; flex: none; }
  .filter { height: 32px; padding-top: 3px; }
  .select { height: 19px; border: 1px solid #666; border-radius: 3px; background: #454545; display: flex; align-items: center; justify-content: space-between; padding-left: 8px; color: #e8e8e8; font-size: 10.5px; flex: none; }
  .select i { width: 16px; height: 17px; display: flex; align-items: center; justify-content: center; }
  .select.divided { padding-left: 4px; }
  .select.divided i { border-left: 1px solid #666; }
  .typesel { padding-left: 4px; }
  .typesel .ic { width: 17px; height: 17px; }
  .typesel i { margin-left: auto; }
  .ficons { display: flex; padding-left: 16px; gap: .5px; }
  .ficons .ic:nth-child(3) { transform: scale(.75); }
  .switch { width: 10px; height: 20px; border-radius: 5px; background: #3b3b3b; margin-left: 15px; border: 1px solid #444; }
  .switch i { display: block; width: 8px; height: 8px; border-radius: 50%; background: #ddd; }
  .lrow label { padding: 0 4px 0 7px; font-size: 10.5px; color: #c8c8c8; }
  .locks { border: 0; padding-bottom: 1px; }
  .locks label:first-child { padding-left: 2px; }
  .lockset { display: flex; width: 129px; margin-right: 8px; margin-left: -1px; }
  .lockset .ic { width: 22px; height: 22px; }
  .list { height: 320px; overflow: hidden; display: flex; flex: none; }
  .list ul { width: 269px; }
  li { display: flex; }
  .list li { height: 23px; border-top: 1px solid #434343; }
  .eye { width: 30px; border-right: 1px solid #434343; padding: 6px 0 0 9px; }
  .eye svg { width: 13px; height: 9px; fill: #ddd; margin-top: 1px; }
  .row { flex: 1; display: flex; padding-left: 5px; font: 10px/14px 'DejaVu Sans Condensed', 'DejaVu Sans', sans-serif; }
  .row .t { margin: 6px 0 0 12px; }
  .twist { width: 5px; height: 10px; margin: 6px 6px 0 0; fill: none; stroke: #bbb; }
  .fold { width: 14px; height: 12px; fill: #ddd; margin-top: 5px; }
  .sel .row { background: #6a6a6a; }
  .lscroll { flex: 1; background: #494949; display: flex; flex-direction: column; align-items: center; padding: 8px 0 6px; }
  .lscroll i { width: 11px; height: 157px; background: #696969; margin: 4px 0 auto; }
  .lfoot { flex: 1; display: flex; align-items: center; justify-content: flex-end; padding: 3px 22px 0 0; gap: 3.2px; border-bottom: 2px solid #383838; }
  .lfoot em { width: 24px; text-align: center; font: italic 14px 'Liberation Serif', serif; }

  .libs { background: #4d4d4d; display: flex; flex-direction: column; border-right: 1px solid #3a3a3a; min-width: 0; }
  .libtop { height: 63px; background: #535353; border-bottom: 1px solid #3a3a3a; padding: 6px 0 0 9px; flex: none; }
  .librow { display: flex; align-items: center; }
  .librow .select { padding-left: 10px; padding-right: 1px; font-size: 11px; }
  .gridbtn { width: 22px; height: 24px; margin-left: 7px; background: #333; border: 1px solid #666; border-radius: 3px; display: flex; align-items: center; justify-content: center; }
  .gridbtn svg, .listbtn { width: 12px; height: 12px; fill: #e4e4e4; }
  .listbtn { margin-left: 9px; }
  .libsearch { display: flex; align-items: center; color: #999; padding-top: 6px; margin-left: -3px; gap: 3px; }
  .libsearch .ic { width: 20px; height: 20px; }
  .libbody { flex: 1; display: flex; gap: 3px; padding: 249px 0 0 11px; }
  .card { width: 67px; height: 45px; background: #fff; border: 1px solid #333; display: flex; }
  .card b { color: #000; font: bold 33px/42px 'Open Sans', sans-serif; margin-left: 13px; width: 41px; letter-spacing: -1.5px; }
  .card i { width: 10px; height: 6px; background: #000; margin-top: 2px; }
  .libfoot { height: 26px; background: #535353; border-top: 1px solid #3f3f3f; border-bottom: 2px solid #383838; display: flex; justify-content: space-between; align-items: center; padding: 2px 20px 0 11px; }
  .libfoot svg { width: 40px; height: 16px; fill: #ddd; }
  .bin { fill: none; stroke: #888; stroke-width: 1.3; }

  .taskbar { height: 40px; border-top: 1px solid #dae6f2; background: linear-gradient(90deg, #8195ae 0 52px, #9fb4d1 62px 420px, #a7c0dd 470px 1680px, #8296ad 1716px); display: flex; align-items: center; flex: none; }
  .start { width: 59px; padding-left: 8px; }
  .start svg { width: 38px; height: 38px; }
  .tb { width: 59px; height: 39px; border: 1px solid #5c6f87; box-shadow: inset 0 0 0 1px #e5edf6; border-radius: 3px; background: linear-gradient(135deg, #c3d1e2, #a5b7cf); display: flex; align-items: center; justify-content: center; flex: none; }
  .tb svg { width: 32px; height: 32px; }
  .bright { background: linear-gradient(135deg, #eef3f9, #c8d6e6); }
  .stack { width: 54px; margin-right: 4px; box-shadow: inset 0 0 0 1px #e5edf6, 4px 0 0 -1px #c3d1e2, 4px 0 0 0 #5c6f87; }
  .g3 { margin-left: 3px; }
  .plain { width: 32px; }
  .plain svg { width: 32px; height: 32px; }
  .p1 { margin-left: 18px; } .p2 { margin-left: 30px; } .p3 { margin-left: 15px; } .p4 { margin-left: 18px; } .p5 { margin-left: 31px; } .p6 { margin-left: 15px; }
  .p5 svg { width: 30px; }
  .psicon { width: 28px; height: 27px; border: 2px solid #00c8ff; background: #001d26; color: #00c8ff; font: 600 14px/22px 'Open Sans', sans-serif; text-align: center; }
  .tray { margin-left: auto; display: flex; align-items: center; height: 39px; color: #fff; }
  .lang { width: 30px; margin-top: -3px; color: #e4ebf3; font-size: 12px; }
  .tray svg { width: 60px; height: 18px; }
  .clock { width: 88px; display: flex; flex-direction: column; align-items: center; line-height: 17px; font-size: 11.5px; margin-right: -3px; padding-left: 3px; }
  .desk { width: 14px; height: 39px; background: linear-gradient(160deg, #b9c6d5, #55667b 50%, #8b9bb0); border: 1px solid #3e4d60; margin-left: 3px; }

  .float { position: absolute; background: #535353; border: 1px solid #353535; box-shadow: 0 1px 3px #0005; display: flex; flex-direction: column; }
  .fhead { height: 14px; background: #464646; border-bottom: 1px solid #383838; display: flex; justify-content: flex-end; align-items: center; padding: 2px 4px 0 0; flex: none; }
  .fhead svg { width: 26px; height: 8px; fill: #bbb; }
  .fhead .x { stroke: #bbb; stroke-width: 2; }
  .historique { left: 1362px; top: -1px; width: 208px; height: 161px; }
  .hist { height: 84px; display: flex; overflow: hidden; border-bottom: 1px solid #383838; padding-top: 4px; flex: none; }
  .hist ul { width: 190px; height: 79px; display: flex; flex-direction: column; justify-content: flex-end; overflow: hidden; }
  .hist li { height: 23px; flex: none; border-top: 1px solid #414141; align-items: center; color: #ccc; padding-left: 6px; font-size: 10.5px; }
  .hist li.sel { background: #6b6b6b; color: #eee; }
  .hist li i { width: 12px; height: 12px; border: 1px solid; border-color: #444 #777 #777 #444; }
  .hist .ic { width: 22px; height: 22px; margin: 0 9px 0 10px; }
  .hist li .t { margin-top: -2px; }
  .hscroll { flex: 1; background: #494949; display: flex; flex-direction: column; align-items: center; padding: 7px 0; margin-left: 1px; }
  .hscroll i { width: 12px; height: 19px; background: #6b6b6b; margin: auto 0 3px; }
  .hfoot { height: 26px; display: flex; align-items: center; gap: 4px; padding: 0 0 1px 100px; border-bottom: 1px solid #383838; flex: none; }
  .hfoot .ic { width: 25px; margin-right: 1px; }
  .hbase { padding: 1px 0 0 84px; }
  .caractere { left: 1689px; top: 147px; width: 220px; height: 265px; }
  .cbody { padding-left: 3px; font-size: 10.5px; }
  .crow { display: flex; align-items: center; height: 22px; }
  .crow.first { padding: 8px 0 0 3px; gap: 8px; height: 35px; align-items: flex-start; }
  .g { width: 20px; height: 20px; display: flex; align-items: center; color: #ddd; }
  .g svg { fill: none; stroke: #ddd; stroke-width: 1.2; }
  .serif { font: 18px/20px 'Liberation Serif', serif; align-items: baseline; }
  .serif b { font-size: 20px; }
  .serif small { font-size: 11px; font-weight: 700; }
  .select + .g { margin-left: 17px; width: 21px; }
  .lead svg { width: 16px; height: 18px; }
  .va, .vab { flex-direction: column; align-items: flex-start; line-height: 13px; }
  .va u { font-size: 12px; text-decoration: none; letter-spacing: -.5px; }
  .va svg, .vab svg { width: 18px; height: 5px; }
  .va svg { margin-top: 1px; }
  .vab b { background: #ddd; color: #444; font-size: 12px; line-height: 12px; width: 18px; text-align: center; margin-bottom: 1px; }
  .vab.plainT b { background: none; color: #ddd; font: bold 18px/13px 'Liberation Serif', serif; }
  .scale { margin-top: 4px; }
  .ud { width: 5px; height: 14px; }
  .inp { width: 56px; height: 18px; border: 1px solid #6b6b6b; background: #454545; padding: 1px 3px; color: #eee; margin-left: 1px; }
  .inp + .g { margin-left: 48px; width: 21px; }
  .inp + label { margin-left: 21px; width: 49px; color: #c8c8c8; }
  .redchip { width: 56px; height: 20px; background: red; border: 1px solid #333; }
  .aa { font-size: 14px; align-items: flex-start; }
  .aa sup { font-size: 9px; line-height: 10px; border-bottom: 1px solid #ddd; }
  .glyphs { display: grid; grid-template-columns: repeat(8, 24px); padding-left: 9px; margin-top: 8px; height: 24px; line-height: 23px; text-align: center; font-family: 'Liberation Serif', serif; font-size: 16px; font-weight: 700; }
  .glyphs small, .glyphs sup, .glyphs sub { font-size: 9px; line-height: 0; }
  .glyphs > b:first-child { -webkit-text-stroke: .7px #e4e4e4; }
  .ot { font-weight: 400; font-size: 19px; margin-top: 8px; height: 23px; }
  .glyphs .box { background: #363636; border: 1px solid #5e5e5e; border-radius: 3px; width: 23px; line-height: 20px; }
  .over { text-decoration: overline; font-weight: 700; font-size: 17px; }
  .lang2 { padding-left: 4px; margin-top: 7px; }
  .aasym { width: 25px; text-align: center; font-size: 13px; }
  .aasym sup { font-size: 10px; line-height: 0; }

  .dropdown { position: absolute; left: 39px; top: 23px; width: 282px; height: 467px; background: #f0f0f0; border: 1px solid #979797; box-shadow: 2px 2px 2px #0008; color: #111; padding: 2px; font-size: 11.5px; line-height: 18px; }
  .item { height: 19px; display: flex; padding: 0 16px 0 17px; align-items: center; position: relative; }
  .item .key { margin-left: auto; }
  .item svg { width: 4px; height: 8px; margin-left: auto; margin-right: -9px; }
  .item.off { color: #7b7b7b; }
  .item.gap { margin-top: 1px; }
  .item.gap2 { margin-top: 6px; }
  hr:has(+ .gap2) { margin-bottom: 0; }
  .item.on { background: #3399ff; color: #fff; padding-top: 1px; }
  .item.on svg { fill: #fff; }
  hr { margin: 2px 1px 4px; border: 0; height: 2px; background: linear-gradient(#9d9d9d 50%, #fff 50%); }
  .submenu { position: absolute; left: 315px; top: 307px; width: 123px; height: 25px; padding: 2px; background: #f0f0f0; border: 1px solid #979797; box-shadow: 3px 3px 2px #0007; font-size: 11.5px; }
  .submenu div { background: #3399ff; height: 19px; display: flex; align-items: center; padding-left: 3px; gap: 6px; color: #fff; }
  .submenu svg { width: 8px; height: 8px; fill: none; stroke: #fff; stroke-width: 1.8; }

  .link, .frame, .note { position: absolute; }
  .link { background: red; }
  .frame { border: 10px solid red; }
  .l1 { left: 317px; top: 221px; width: 190px; height: 10px; }
  .l2 { left: 145px; top: 340px; width: 10px; height: 146px; }
  .l3 { left: 1287px; top: 781px; width: 104px; height: 10px; }
  .f1 { left: 42px; top: 213px; width: 275px; height: 45px; }
  .f2 { left: 24px; top: 292px; width: 428px; height: 52px; }
  .f3 { left: 1389px; top: 681px; width: 292px; height: 337px; }
  .note { border: 10px solid red; background: #fff; }
  .note svg { width: 100%; height: 100%; overflow: visible; }
  .note text { font-size: 43px; fill: red; }
  .save-note { left: 505px; top: 34px; width: 758px; height: 267px; }
  .generate-note { left: 40px; top: 484px; width: 502px; height: 222px; }
  .rename-note { left: 785px; top: 520px; width: 502px; height: 424px; }
</style>
